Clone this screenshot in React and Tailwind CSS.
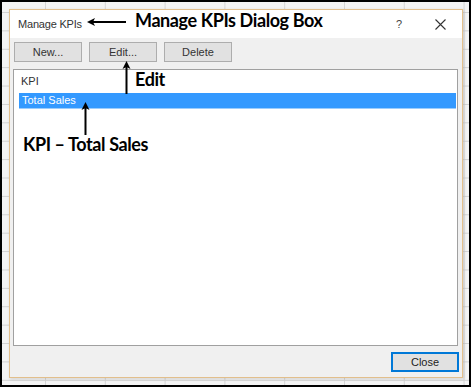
import React from "react";

function Btn({ children, primary }) {
  return (
    <button
      className={
        primary
          ? "w-[68px] h-[20px] bg-[#e1e1e1] border-2 border-[#0078d7] text-[11px] text-[#222] flex items-center justify-center leading-none"
          : "w-[68px] h-[20px] bg-[#e1e1e1] border border-[#adadad] text-[11px] text-[#333] flex items-center justify-center leading-none"
      }
      style={{ fontFamily: '"Liberation Sans", Arial, sans-serif' }}
    >
      {children}
    </button>
  );
}

export default function App() {
  const ui = { fontFamily: '"Liberation Sans", Arial, sans-serif' };
  const ann = { fontFamily: 'Lato, "Liberation Sans", Arial, sans-serif' };
  return (
    <div className="relative w-[471px] h-[387px] border-2 border-black box-border bg-[#f4f4f4] bg-[linear-gradient(to_bottom,#d2d2d2_1px,transparent_1px),linear-gradient(to_right,#d6d6d6_1px,transparent_1px)] bg-[size:100%_18.4px,59.8px_100%] bg-[position:0_10px,43px_0] pl-[7px] pt-[7px] overflow-hidden">
      {/* Dialog */}
      <div className="w-[454px] h-[369px] border border-[#e2bf8c] bg-[#f0f0f0] flex flex-col shadow-[1px_1px_3px_rgba(0,0,0,0.15)]" style={ui}>
        {/* Title bar */}
        <div className="h-[28px] bg-white flex items-center pl-[8px] pr-[14px] shrink-0">
          <span className="text-[11px] text-[#333] tracking-[-0.2px]">Manage KPIs</span>
          <div className="flex-1" />
          <span className="text-[11px] text-[#444] mr-[33px]">?</span>
          <svg width="11" height="11" viewBox="0 0 11 11" className="mr-[2px]">
            <path d="M0.5 0.5 L10.5 10.5 M10.5 0.5 L0.5 10.5" stroke="#333" strokeWidth="1.1" />
          </svg>
        </div>
        {/* Toolbar */}
        <div className="flex gap-[7px] pl-[4px] pt-[4px] shrink-0">
          <Btn>New...</Btn>
          <Btn>Edit...</Btn>
          <Btn>Delete</Btn>
        </div>
        {/* List */}
        <div className="mt-[7px] ml-[3px] mr-[4px] h-[277px] border border-[#a0a0a0] bg-white flex flex-col shrink-0">
          <div className="h-[22px] pl-[7px] flex items-end pb-[3px] text-[11px] text-[#333]">KPI</div>
          <div className="ml-[5px] mr-[1px] mt-[1px] h-[16px] bg-[#3399ff] border-b border-[#9ccdfd] flex items-center pl-[3px] text-[11px] text-white">
            Total Sales
          </div>
        </div>
        {/* Footer */}
        <div className="flex justify-end pr-[3px] pt-[6px]">
          <Btn primary>Close</Btn>
        </div>
      </div>

      {/* Annotations */}
      <svg className="absolute left-0 top-0" width="471" height="387" viewBox="0 0 471 387">
        <line x1="89" y1="20" x2="124" y2="20" stroke="#000" strokeWidth="2" />
        <path d="M85 20 L93 16 L91 20 L93 24 Z" fill="#000" />
        <line x1="124.5" y1="64" x2="124.5" y2="92" stroke="#000" strokeWidth="2" />
        <path d="M124.5 59 L120.5 67 L124.5 65 L128.5 67 Z" fill="#000" />
        <line x1="83.5" y1="105" x2="83.5" y2="133" stroke="#000" strokeWidth="2" />
        <path d="M83.5 100 L79.5 108 L83.5 106 L87.5 108 Z" fill="#000" />
      </svg>
      <div className="absolute left-[133px] top-[9px] text-[18px] tracking-[-0.4px] font-bold text-black leading-none whitespace-nowrap" style={ann}>
        Manage KPIs Dialog Box
      </div>
      <div className="absolute left-[133px] top-[68px] text-[18px] tracking-[-0.4px] font-bold text-black leading-none whitespace-nowrap" style={ann}>
        Edit
      </div>
      <div className="absolute left-[21px] top-[133px] text-[18px] tracking-[-0.4px] font-bold text-black leading-none whitespace-nowrap" style={ann}>
        KPI – Total Sales
      </div>
    </div>
  );
}
